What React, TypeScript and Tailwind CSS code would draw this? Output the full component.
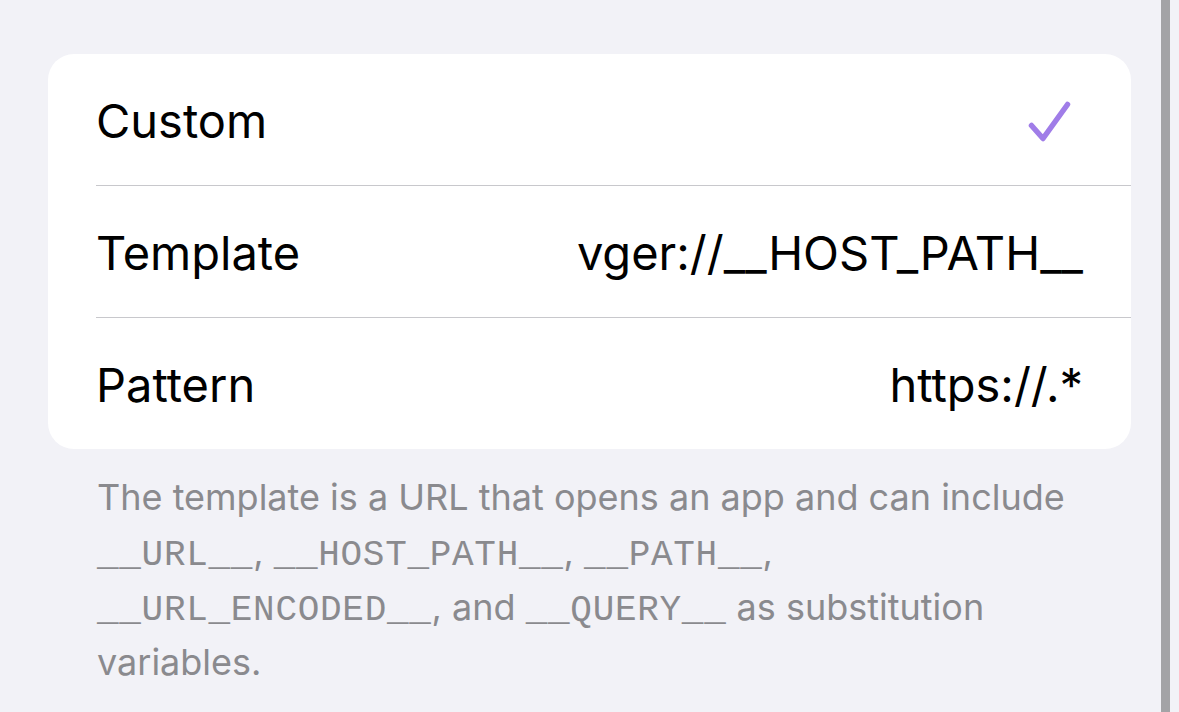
const rows = [
  { label: 'Custom', value: null },
  { label: 'Template', value: 'vger://__HOST_PATH__' },
  { label: 'Pattern', value: 'https://.*' },
];

function Check() {
  return (
    <svg width="44" height="44" viewBox="0 0 44 44" fill="none">
      <path
        d="M4.5 25.5 L16 38.5 L40.5 4.5"
        stroke="#a07de8"
        strokeWidth="5.5"
        strokeLinecap="round"
        strokeLinejoin="round"
      />
    </svg>
  );
}

const mono = 'font-["Liberation_Mono",monospace] tracking-[0.7px] leading-none';

export default function App() {
  return (
    <div className='flex h-[712px] w-[1179px] overflow-hidden bg-[#f2f2f7] font-["Inter","Liberation_Sans",sans-serif]'>
      <div className="flex w-[1131px] flex-col pl-12 pt-[54px]">
        <div className="overflow-hidden rounded-[26px] bg-white">
          {rows.map((r, i) => (
            <div key={r.label} className="flex flex-col pl-12">
              {i > 0 && <div className="h-px bg-[#c8c8cc]" />}
              <div className="flex h-[131px] items-center justify-between pr-12 pt-[4px] text-[47px] text-black">
                <span>{r.label}</span>
                {r.value ? <span>{r.value}</span> : <span className="mr-[12px]"><Check /></span>}
              </div>
            </div>
          ))}
        </div>
        <p className="px-[49px] pt-[21px] text-[36px] leading-[55px] text-[#8a8a8e]">
          The template is a URL that opens an app and can include
          <br />
          <span className={mono}>__URL__</span>, <span className={mono}>__HOST_PATH__</span>,{' '}
          <span className={mono}>__PATH__</span>,
          <br />
          <span className={mono}>__URL_ENCODED__</span>, and <span className={mono}>__QUERY__</span> as substitution
          <br />
          variables.
        </p>
      </div>
      <div className="ml-[30px] h-full w-[9px] bg-[#a3a3a6]" />
    </div>
  );
}
